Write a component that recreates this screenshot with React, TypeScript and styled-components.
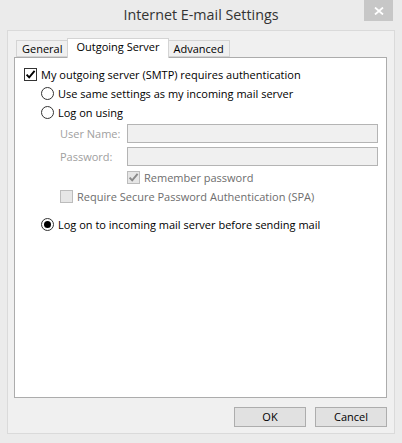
import styled, { createGlobalStyle } from "styled-components";

const GlobalStyle = createGlobalStyle`
    html, body {
        margin: 0;
        padding: 0;
        background: #ebebeb;
    }
    * {
        box-sizing: border-box;
    }
`

const font = '"Open Sans", "Noto Sans", sans-serif';

const CheckMark = ({color}: {color: string}) => (
    <svg width="11" height="11" viewBox="0 0 11 11">
        <path d="M1.6 5.6 L4.2 8.4 L9.6 1.8" fill="none" stroke={color} strokeWidth="1.9"/>
    </svg>
);

const Check = ({checked, disabled}: {checked?: boolean; disabled?: boolean}) => (
    <CheckBox $disabled={disabled}>
        {checked && <CheckMark color={disabled ? "#8a8a8a" : "#000"}/>}
    </CheckBox>
);

const Radio = ({checked}: {checked?: boolean}) => (
    <RadioCircle>{checked && <RadioDot/>}</RadioCircle>
);

export default function App() {
    return (
        <Window>
            <GlobalStyle/>
            <TitleBar>
                <span/>
                <Title>Internet E-mail Settings</Title>
                <CloseButton>
                    <svg width="10" height="8" viewBox="0 0 10 8">
                        <path d="M1 0.5 L9 7.5 M9 0.5 L1 7.5" stroke="#fff" strokeWidth="1.8"/>
                    </svg>
                </CloseButton>
            </TitleBar>
            <Client>
                <TabStrip>
                    <Tab>General</Tab>
                    <Tab $active>Outgoing Server</Tab>
                    <Tab>Advanced</Tab>
                </TabStrip>
                <Panel>
                    <Row>
                        <Check checked/>
                        <Label>My outgoing server (SMTP) requires authentication</Label>
                    </Row>
                    <Row $indent={17}>
                        <Radio/>
                        <Label>Use same settings as my incoming mail server</Label>
                    </Row>
                    <Row $indent={17}>
                        <Radio/>
                        <Label>Log on using</Label>
                    </Row>
                    <FieldRow $top={2}>
                        <FieldLabel>User Name:</FieldLabel>
                        <Input/>
                    </FieldRow>
                    <FieldRow $top={4}>
                        <FieldLabel>Password:</FieldLabel>
                        <Input/>
                    </FieldRow>
                    <Row $indent={103} $top={2}>
                        <Check checked disabled/>
                        <Label $disabled>Remember password</Label>
                    </Row>
                    <Row $indent={36}>
                        <Check disabled/>
                        <Label $disabled>Require Secure Password Authentication (SPA)</Label>
                    </Row>
                    <Row $indent={17} $top={9}>
                        <Radio checked/>
                        <Label>Log on to incoming mail server before sending mail</Label>
                    </Row>
                </Panel>
                <ButtonRow>
                    <Button>OK</Button>
                    <Button>Cancel</Button>
                </ButtonRow>
            </Client>
        </Window>
    );
}

const Window = styled.div`
    width: 402px;
    height: 443px;
    padding: 0 7px 9px;
    display: flex;
    flex-direction: column;
    background: #ebebeb;
    font-family: ${font};
`

const TitleBar = styled.div`
    height: 30px;
    display: grid;
    grid-template-columns: 1fr auto 1fr;
    align-items: start;
`

const Title = styled.div`
    font-size: 14.3px;
    line-height: 30px;
    color: #333;
    white-space: nowrap;
`

const CloseButton = styled.div`
    justify-self: end;
    width: 29px;
    height: 21px;
    margin-right: 2px;
    background: #c7c7c7;
    display: flex;
    align-items: center;
    justify-content: center;
`

const Client = styled.div`
    flex: 1;
    border: 1px solid #dadada;
    background: #f0f0f0;
    padding: 7px 7px 0 6px;
    display: flex;
    flex-direction: column;
`

const TabStrip = styled.div`
    display: flex;
    align-items: flex-end;
    height: 20px;
    margin: 0 0 -1px 2px;
    position: relative;
    z-index: 1;
`

const Tab = styled.div<{$active?: boolean}>`
    height: ${p => p.$active ? 20 : 17}px;
    padding: 0 ${p => p.$active ? 8 : 5}px;
    margin-bottom: ${p => p.$active ? 0 : 1}px;
    border: 1px solid #d4d4d4;
    border-bottom: ${p => p.$active ? "none" : "1px solid #d4d4d4"};
    background: ${p => p.$active ? "#fff" : "#f0f0f0"};
    font-size: 11px;
    line-height: 16px;
    color: #000;
    white-space: nowrap;
    & + & {
        margin-left: -1px;
    }
`

const Panel = styled.div`
    height: 341px;
    border: 1px solid #acacac;
    background: #fff;
    padding: 7px 0 0 9px;
    display: flex;
    flex-direction: column;
`

const Row = styled.div<{$indent?: number; $top?: number}>`
    height: 19px;
    display: flex;
    align-items: center;
    gap: 4px;
    margin-left: ${p => p.$indent ?? 0}px;
    margin-top: ${p => p.$top ?? 0}px;
`

const Label = styled.span<{$disabled?: boolean}>`
    font-size: 11px;
    color: ${p => p.$disabled ? "#6d6d6d" : "#000"};
    white-space: nowrap;
`

const CheckBox = styled.span<{$disabled?: boolean}>`
    width: 13px;
    height: 13px;
    flex: none;
    border: 1px solid ${p => p.$disabled ? "#bcbcbc" : "#333"};
    background: ${p => p.$disabled ? "#e6e6e6" : "#fff"};
    display: flex;
    align-items: center;
    justify-content: center;
`

const RadioCircle = styled.span`
    width: 13px;
    height: 13px;
    flex: none;
    border: 1px solid #333;
    border-radius: 50%;
    background: #fff;
    display: flex;
    align-items: center;
    justify-content: center;
`

const RadioDot = styled.span`
    width: 7px;
    height: 7px;
    border-radius: 50%;
    background: #000;
`

const FieldRow = styled.div<{$top: number}>`
    height: 19px;
    margin: ${p => p.$top}px 0 0 36px;
    display: grid;
    grid-template-columns: 67px 251px;
    align-items: center;
`

const FieldLabel = styled.span`
    font-size: 11px;
    color: #a0a0a0;
    white-space: nowrap;
`

const Input = styled.div`
    height: 19px;
    border: 1px solid #b4b4b4;
    background: #f0f0f0;
`

const ButtonRow = styled.div`
    display: flex;
    justify-content: flex-end;
    gap: 9px;
    margin-top: 9px;
`

const Button = styled.div`
    width: 72px;
    height: 20px;
    border: 1px solid #adadad;
    background: #e1e1e1;
    font-size: 11px;
    line-height: 18px;
    text-align: center;
    color: #000;
`
